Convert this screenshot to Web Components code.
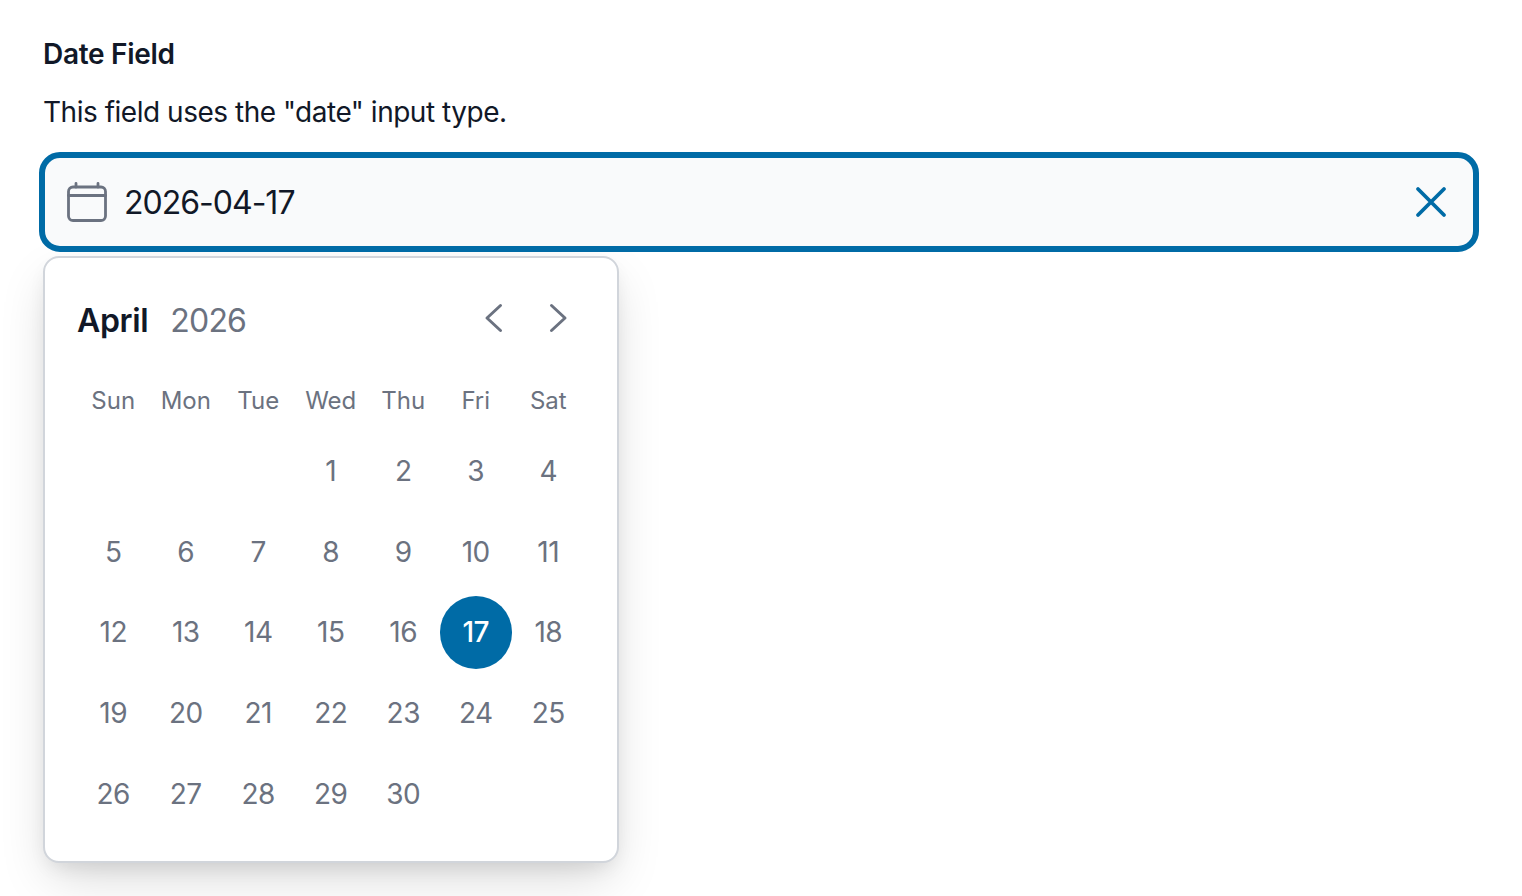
<!DOCTYPE html>
<html>
<head>
<meta charset="utf-8">
<title>Date Field</title>
<style>
  html, body { margin: 0; background: #fff; height: 100%; overflow: hidden; }
  body { font-family: Inter, "Noto Sans", sans-serif; }
</style>
</head>
<body>
<date-field label="Date Field" hint='This field uses the "date" input type.' value="2026-04-17"></date-field>
<script>
class CalendarIcon extends HTMLElement {
  constructor() {
    super();
    this.attachShadow({ mode: 'open' });
    this.shadowRoot.innerHTML = `
      <style>:host { display: block; width: 40px; height: 40px; } svg { display: block; }</style>
      <svg width="40" height="40" viewBox="0 0 40 40" fill="none" stroke="#6b7280" stroke-width="2.8" stroke-linecap="round" stroke-linejoin="round">
        <path d="M9 1.5V5M31 1.5V5"/>
        <rect x="1.5" y="5" width="37" height="33.5" rx="4.5"/>
        <path d="M1.5 13.5H38.5"/>
      </svg>`;
  }
}
customElements.define('calendar-icon', CalendarIcon);

class DayCell extends HTMLElement {
  constructor() {
    super();
    this.attachShadow({ mode: 'open' });
    this.shadowRoot.innerHTML = `
      <style>
        :host { display: flex; align-items: center; justify-content: center; height: 72.7px; color: #6b7280; font-size: 28px; letter-spacing: -0.5px; }
        :host([selected]) span { background: #006ba6; color: #fff; font-weight: 500; }
        span { width: 72.7px; height: 72.7px; border-radius: 50%; display: flex; align-items: center; justify-content: center; }
      </style>
      <span><slot></slot></span>`;
  }
}
customElements.define('day-cell', DayCell);

class DatePopup extends HTMLElement {
  constructor() {
    super();
    this.attachShadow({ mode: 'open' });
  }
  connectedCallback() {
    const [y, m, d] = this.getAttribute('value').split('-').map(Number);
    const first = new Date(y, m - 1, 1).getDay();
    const count = new Date(y, m, 0).getDate();
    const month = new Date(y, m - 1, 1).toLocaleString('en-US', { month: 'long' });
    let cells = '';
    for (let i = 0; i < first; i++) cells += '<i></i>';
    for (let n = 1; n <= count; n++) cells += `<day-cell ${n === d ? 'selected' : ''}>${n}</day-cell>`;
    const names = ['Sun', 'Mon', 'Tue', 'Wed', 'Thu', 'Fri', 'Sat'];
    this.shadowRoot.innerHTML = `
      <style>
        :host {
          display: block; box-sizing: border-box; width: 576px; height: 607px;
          background: #fff; border: 2px solid #d1d5db; border-radius: 16px;
          box-shadow: 0 20px 50px -8px rgba(0,0,0,.17), 0 8px 20px -6px rgba(0,0,0,.1);
          padding: 32px 32px 0 32px;
        }
        .head { display: flex; align-items: center; height: 60px; }
        .month { font-size: 32px; font-weight: 600; color: #111827; letter-spacing: -0.35px; }
        .year { font-size: 32px; color: #6b7280; margin-left: 22px; letter-spacing: -0.8px; }
        .nav { margin-left: auto; display: flex; gap: 25.5px; margin-right: 10.5px; margin-top: -4px; }
        .nav svg { display: block; }
        .names, .days { display: grid; grid-template-columns: repeat(7, 72.5px); }
        .names { margin-top: 27px; height: 46px; align-items: center; }
        .names span { text-align: center; color: #6b7280; font-size: 24px; letter-spacing: 0; }
        .days { row-gap: 8px; margin-top: 11.6px; }
      </style>
      <div class="head">
        <span class="month">${month}</span>
        <span class="year">${y}</span>
        <div class="nav">
          <svg width="36" height="36" viewBox="0 0 36 36" fill="none" stroke="#6b7280" stroke-width="3" stroke-linecap="round" stroke-linejoin="round"><path d="M23.5 5.5L10 18l13.5 12.5"/></svg>
          <svg width="36" height="36" viewBox="0 0 36 36" fill="none" stroke="#6b7280" stroke-width="3" stroke-linecap="round" stroke-linejoin="round"><path d="M12.5 5.5L26 18 12.5 30.5"/></svg>
        </div>
      </div>
      <div class="names">${names.map(n => `<span>${n}</span>`).join('')}</div>
      <div class="days">${cells}</div>`;
  }
}
customElements.define('date-popup', DatePopup);

class DateField extends HTMLElement {
  constructor() {
    super();
    this.attachShadow({ mode: 'open' });
  }
  connectedCallback() {
    const value = this.getAttribute('value');
    this.shadowRoot.innerHTML = `
      <style>
        :host { display: block; padding: 36px 43px 0 43px; color: #111827; }
        .label { font-size: 28px; font-weight: 600; line-height: 36px; letter-spacing: -0.3px; }
        .hint { font-size: 28px; line-height: 40px; margin-top: 20px; letter-spacing: -0.48px; }
        .input {
          box-sizing: border-box; height: 100px; margin: 20px 0 4px 0; width: 1440px; position: relative; left: -4px;
          display: flex; align-items: center; padding: 0 22px;
          background: #f9fafb; border: 6px solid #006ba6; border-radius: 21px;
        }
        .value { font-size: 32px; margin-left: 17px; letter-spacing: -1px; }
        .clear { margin-left: auto; display: block; }
      </style>
      <div class="label">${this.getAttribute('label')}</div>
      <div class="hint">${this.getAttribute('hint').replace(/"/g, '&quot;')}</div>
      <div class="input">
        <calendar-icon></calendar-icon>
        <span class="value">${value}</span>
        <svg class="clear" width="40" height="40" viewBox="0 0 40 40" fill="none" stroke="#006ba6" stroke-width="3.8" stroke-linecap="round"><path d="M7 7L33 33M33 7L7 33"/></svg>
      </div>
      <date-popup value="${value}"></date-popup>`;
  }
}
customElements.define('date-field', DateField);
</script>
</body>
</html>
